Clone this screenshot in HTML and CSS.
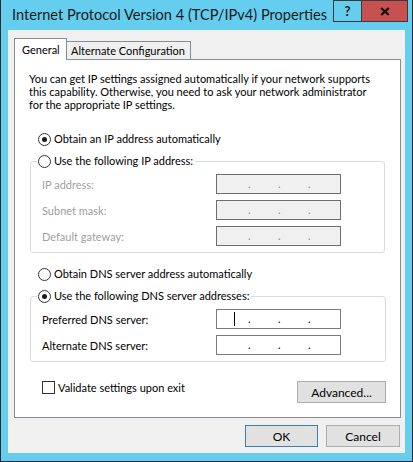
FILE: index.html
```html
<!DOCTYPE html>
<html>
<head>
<meta charset="utf-8">
<link rel="stylesheet" href="styles.css">
</head>
<body>
<div class="window">
  <div class="titlebar">
    <div class="title">Internet Protocol Version 4 (TCP/IPv4) Properties</div>
    <div class="caption-buttons">
      <div class="cbtn help">?</div>
      <div class="cbtn close"><svg width="10" height="9" viewBox="0 0 10 9"><path d="M1.2 1 L8.8 8 M8.8 1 L1.2 8" stroke="#111" stroke-width="2.2" fill="none"/></svg></div>
    </div>
  </div>
  <div class="client">
    <div class="tabs">
      <div class="tab active">General</div>
      <div class="tab">Alternate Configuration</div>
    </div>
    <div class="panel">
      <p class="desc">You can get IP settings assigned automatically if your network supports<br>this capability. Otherwise, you need to ask your network administrator<br>for the appropriate IP settings.</p>

      <div class="option first"><span class="radio on"></span><span>Obtain an IP address automatically</span></div>

      <div class="group g1">
        <div class="legend"><span class="radio"></span><span>Use the following IP address:</span></div>
        <div class="field disabled"><span class="lbl">IP address:</span><span class="ip"><i>.</i><i>.</i><i>.</i></span></div>
        <div class="field disabled"><span class="lbl">Subnet mask:</span><span class="ip"><i>.</i><i>.</i><i>.</i></span></div>
        <div class="field disabled"><span class="lbl">Default gateway:</span><span class="ip"><i>.</i><i>.</i><i>.</i></span></div>
      </div>

      <div class="option second"><span class="radio"></span><span>Obtain DNS server address automatically</span></div>

      <div class="group g2">
        <div class="legend"><span class="radio on"></span><span>Use the following DNS server addresses:</span></div>
        <div class="field"><span class="lbl">Preferred DNS server:</span><span class="ip"><b class="caret"></b><i>.</i><i>.</i><i>.</i></span></div>
        <div class="field"><span class="lbl">Alternate DNS server:</span><span class="ip"><i>.</i><i>.</i><i>.</i></span></div>
      </div>

      <div class="bottom-row">
        <div class="check"><span class="box"></span><span>Validate settings upon exit</span></div>
        <div class="btn advanced">Advanced...</div>
      </div>
    </div>
    <div class="actions">
      <div class="btn default">OK</div>
      <div class="btn">Cancel</div>
    </div>
  </div>
</div>
</body>
</html>
```
FILE: styles.css
```css
html, body {
  margin: 0;
  padding: 0;
}
body {
  font-family: Lato, "Noto Sans", sans-serif;
  font-size: 11px;
  color: #000;
}
.window {
  width: 413px;
  height: 462px;
  box-sizing: border-box;
  background: #65cdee;
  border: 1px solid #2b2b2b;
  border-top: none;
  display: flex;
  flex-direction: column;
}
.titlebar {
  height: 30px;
  display: flex;
  align-items: flex-start;
}
.title {
  flex: 1;
  min-width: 0;
  overflow: hidden;
  font-size: 14.6px;
  line-height: 20px;
  color: #1b1b1b;
  padding: 5px 0 0 11px;
  white-space: nowrap;
}
.caption-buttons {
  display: flex;
  flex: none;
  margin-right: 4px;
}
.cbtn {
  height: 20px;
  border: 1px solid #3a3a3a;
  display: flex;
  align-items: center;
  justify-content: center;
}
.help {
  width: 27px;
  border-right: none;
  font-weight: bold;
  font-size: 13px;
  color: #111;
  background: #65cdee;
}
.close {
  width: 45px;
  background: #c75050;
}
.client {
  flex: 1;
  margin: 0 7px 8px 7px;
  background: #f0f0f0;
  padding: 8px 4px 0 6px;
  display: flex;
  flex-direction: column;
}
.tabs {
  display: flex;
  align-items: flex-end;
  height: 21px;
}
.tab {
  box-sizing: border-box;
  border: 1px solid #898c95;
  border-bottom: none;
  border-left: none;
  height: 18px;
  line-height: 17px;
  padding: 0 0 0 4px;
  width: 124px;
  white-space: nowrap;
  background: #f0f0f0;
  color: #000;
}
.tab.active {
  border-left: 1px solid #898c95;
  background: #fff;
  height: 22px;
  line-height: 21px;
  width: 53px;
  padding-left: 7px;
  margin-bottom: -1px;
  position: relative;
  z-index: 1;
}
.panel {
  box-sizing: border-box;
  height: 359px;
  background: #fff;
  border: 1px solid #898c95;
  display: flex;
  flex-direction: column;
}
.desc {
  margin: 12px 0 0 14px;
  line-height: 13px;
  white-space: nowrap;
}
.option, .legend, .check {
  display: flex;
  align-items: center;
  height: 14px;
  line-height: 14px;
  white-space: nowrap;
}
.option {
  margin-left: 23px;
}
.option.first {
  margin-top: 21px;
}
.option.second {
  margin-top: 14px;
}
.radio {
  box-sizing: border-box;
  width: 13px;
  height: 13px;
  border: 1px solid #333;
  border-radius: 50%;
  background: #fff;
  margin-right: 3px;
  display: flex;
  align-items: center;
  justify-content: center;
  flex: none;
}
.radio.on::after {
  content: "";
  width: 5px;
  height: 5px;
  border-radius: 50%;
  background: #1a1a1a;
}
.group {
  box-sizing: border-box;
  margin-left: 15px;
  width: 355px;
  border: 1px solid #d5dde3;
  border-radius: 3px;
  padding: 0 0 6px 0;
  display: flex;
  flex-direction: column;
  gap: 6px;
}
.g1 {
  margin-top: 15px;
}
.g2 {
  margin-top: 15px;
  width: 356px;
}
.legend {
  margin: -8px 0 0 6px;
  padding: 0 2px 0 1px;
  background: #fff;
  align-self: flex-start;
}
.field {
  display: flex;
  align-items: center;
  height: 20px;
  padding-left: 11px;
}
.lbl {
  width: 174px;
  flex: none;
}
.disabled .lbl {
  color: #a0a0a0;
}
.ip {
  box-sizing: border-box;
  width: 125px;
  height: 20px;
  border: 1px solid #7a7a7a;
  background: #fff;
  display: flex;
  align-items: center;
  padding-left: 31px;
  gap: 27px;
}
.ip i {
  font-style: normal;
  width: 3px;
  line-height: 16px;
}
.disabled .ip {
  border-color: #6e6e6e;
  background: #f0f0f0;
  color: #8a8a8a;
}
.caret {
  flex: none;
  width: 1px;
  height: 14px;
  background: #000;
  margin-left: -14px;
  margin-right: -14px;
}
.bottom-row {
  display: flex;
  justify-content: space-between;
  align-items: flex-start;
  padding: 0 14px 0 27px;
}
.check {
  margin-top: 19px;
  height: 13px;
}
.box {
  box-sizing: border-box;
  width: 13px;
  height: 13px;
  border: 1px solid #333;
  background: #fff;
  margin-right: 3px;
}
.btn {
  box-sizing: border-box;
  height: 22px;
  border: 1px solid #adadad;
  background: #e1e1e1;
  display: flex;
  align-items: center;
  justify-content: center;
  width: 74px;
  font-size: 12px;
}
.advanced {
  margin-top: 19px;
  width: 89px;
}
.actions {
  display: flex;
  justify-content: flex-end;
  gap: 8px;
  margin-top: 7px;
  padding-right: 1px;
}
.btn.default {
  border-color: #3c7fb1;
  width: 73px;
}
```
